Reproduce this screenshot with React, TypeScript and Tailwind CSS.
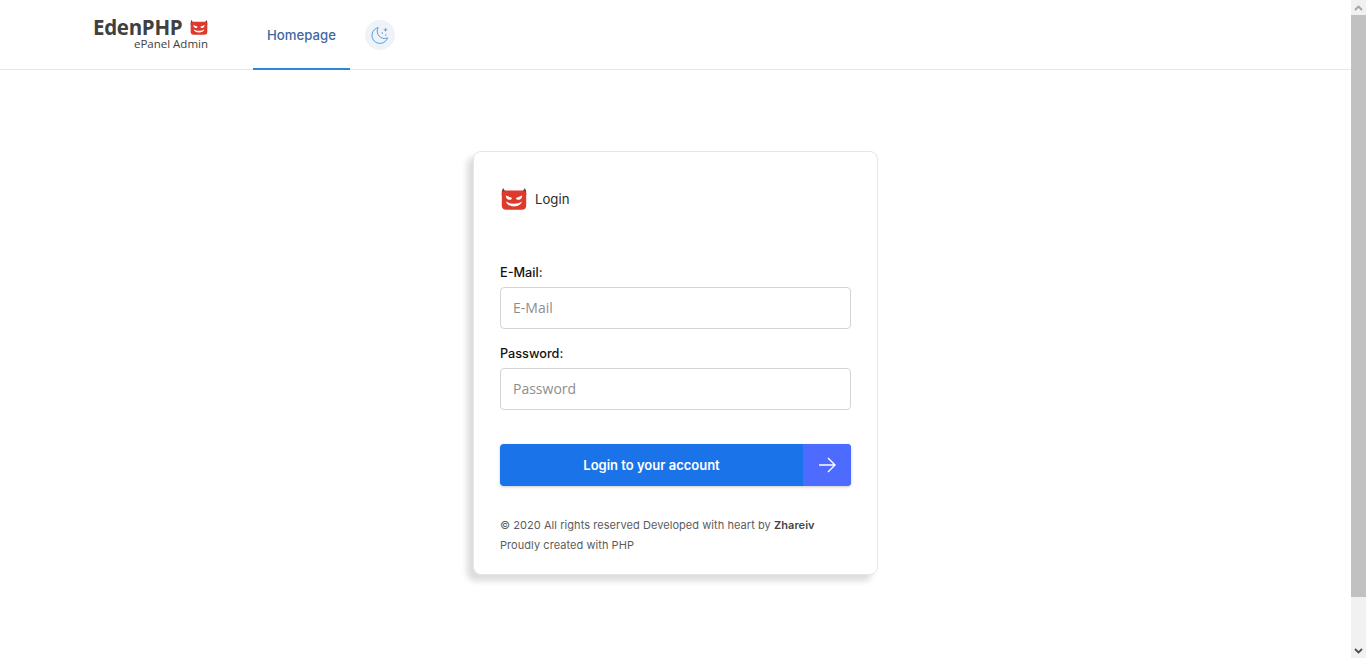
import React from "react";

function Devil({ className }: { className?: string }) {
  return (
    <svg viewBox="0 0 26 22" className={className}>
      <path d="M.8 7C.5 3.6 1 1.4 2.4 0c.4 1.8 1.3 2.8 2.8 3.2h15.6c1.5-.4 2.4-1.4 2.8-3.2 1.4 1.4 1.9 3.6 1.6 7z" fill="#6b3d36" />
      <path d="M4.5 2.6h17c2.3 0 3.7 1.4 3.7 3.6v11.2c0 2.8-1.6 4.4-4.4 4.4H5.2C2.4 21.8.8 20.2.8 17.4V6.2c0-2.2 1.4-3.6 3.7-3.6z" fill="#dd3a2d" />
      <path d="M4.8 7.4l6.2 2.5c-.3 1.4-1.6 2.1-3.2 1.8-1.9-.4-3-2.2-3-4.3zM21.2 7.4L15 9.9c.3 1.4 1.6 2.1 3.2 1.8 1.9-.4 3-2.2 3-4.3z" fill="#fff" />
      <path d="M5 13.6c2.3 1.5 5 2.2 8 2.2s5.7-.7 8-2.2c-.9 3.2-4.2 4.8-8 4.8s-7.1-1.6-8-4.8z" fill="#fff" />
    </svg>
  );
}

export default function App() {
  return (
    <div className="flex h-[658px] overflow-hidden bg-white font-['Inter','Liberation_Sans',sans-serif]">
      <div className="min-w-0 flex-1">
        <header className="flex h-[70px] items-stretch border-b border-[#e8e8e8] pl-[93px]">
          <div className="flex w-[160px] flex-col pt-[17px] font-['Open_Sans','Noto_Sans',sans-serif]">
            <div className="flex h-[20px] w-[115px] items-center justify-between">
              <span className="text-[20.5px] leading-[20px] font-bold tracking-[-0.3px] text-[#404040]">EdenPHP</span>
              <Devil className="h-[15px] w-[18px]" />
            </div>
            <span className="w-[115px] text-right text-[11.5px] leading-[13px] text-[#404040]">ePanel Admin</span>
          </div>
          <nav className="flex items-stretch">
            <a className="-mb-px flex w-[97px] items-center justify-center border-b-2 border-[#2b87da] pt-[4px] text-[13.2px] font-medium text-[#41689f]">
              Homepage
            </a>
            <div className="ml-[15px] mt-[20px] flex h-[30px] w-[30px] items-center justify-center rounded-full bg-[#edf3f9]">
              <svg viewBox="0 0 20 20" className="h-[20px] w-[20px]" fill="none" stroke="#5b9bd9" strokeWidth="1">
                <path d="M8.2 2.6a8 8 0 1 0 9.4 10.2c-1 .5-2.2.7-3.4.7A7.3 7.3 0 0 1 8.2 2.6z" />
                <path d="M15.5 2.5l.6 1.7 1.7.6-1.7.6-.6 1.7-.6-1.7-1.7-.6 1.7-.6z" fill="#5b9bd9" stroke="none" />
                <circle cx="12.3" cy="8" r=".8" fill="#5b9bd9" stroke="none" />
                <circle cx="15.8" cy="10" r=".7" fill="#5b9bd9" stroke="none" />
              </svg>
            </div>
          </nav>
        </header>

        <main className="mx-auto mt-[81px] h-[424px] w-[405px] rounded-[8px] border border-[#e6e6e6] bg-white px-[26px] shadow-[-6px_6px_6px_rgba(0,0,0,0.14)]">
          <div className="flex items-center pt-[36px]">
            <Devil className="ml-px h-[22px] w-[26px]" />
            <span className="ml-[8px] text-[13.2px] leading-[22px] text-[#2b2b2b]">Login</span>
          </div>

          <form className="pt-[52px]">
            <label className="block pt-px text-[12.7px] leading-[20px] font-medium text-[#111]">E-Mail:</label>
            <input
              placeholder="E-Mail"
              className="mt-[4px] block h-[42px] w-full rounded-[4px] border border-[#d4d4d4] px-[12px] pb-[2px] font-['Open_Sans','Noto_Sans',sans-serif] text-[14px] outline-none placeholder:text-[#8e8e8e]"
            />
            <label className="mt-[14px] block pt-px text-[12.7px] leading-[20px] font-medium text-[#111]">Password:</label>
            <input
              placeholder="Password"
              className="mt-[4px] block h-[42px] w-full rounded-[4px] border border-[#d4d4d4] px-[12px] pb-[2px] font-['Open_Sans','Noto_Sans',sans-serif] text-[14px] outline-none placeholder:text-[#8e8e8e]"
            />
            <button
              type="button"
              className="mt-[34px] flex h-[42px] w-full overflow-hidden rounded-[4px] bg-[#1a73e8] text-[13px] font-semibold text-white shadow-[0_1px_3px_rgba(0,0,0,0.2)]"
            >
              <span className="flex h-full flex-1 items-center justify-center pt-[2px]">Login to your account</span>
              <span className="flex h-full w-[48px] items-center justify-center bg-[#4d6bfe]">
                <svg viewBox="0 0 20 20" className="h-[20px] w-[20px]" fill="none" stroke="#fff" strokeWidth="1.4">
                  <path d="M2 10h16M11 3l7 7-7 7" />
                </svg>
              </span>
            </button>
          </form>

          <div className="pt-[29px] text-[11px] leading-[20px] tracking-[0.06px] text-[#5c5c5c]">
            <p>
              © 2020 All rights reserved Developed with heart by <b className="font-semibold text-[#444]">Zhareiv</b>
            </p>
            <p>Proudly created with PHP</p>
          </div>
        </main>
      </div>

      <div className="flex w-[15px] flex-col bg-[#f1f1f1]">
        <div className="flex h-[15px] items-center justify-center">
          <svg viewBox="0 0 9 6" className="h-[6px] w-[9px]" fill="none" stroke="#a3a3a3" strokeWidth="1.8">
            <path d="M1 5l3.5-3.5L8 5" />
          </svg>
        </div>
        <div className="h-[582px] bg-[#c1c1c1]" />
        <div className="flex-1" />
        <div className="flex h-[15px] items-center justify-center">
          <svg viewBox="0 0 9 6" className="h-[6px] w-[9px]" fill="none" stroke="#505050" strokeWidth="1.8">
            <path d="M1 1l3.5 3.5L8 1" />
          </svg>
        </div>
      </div>
    </div>
  );
}
